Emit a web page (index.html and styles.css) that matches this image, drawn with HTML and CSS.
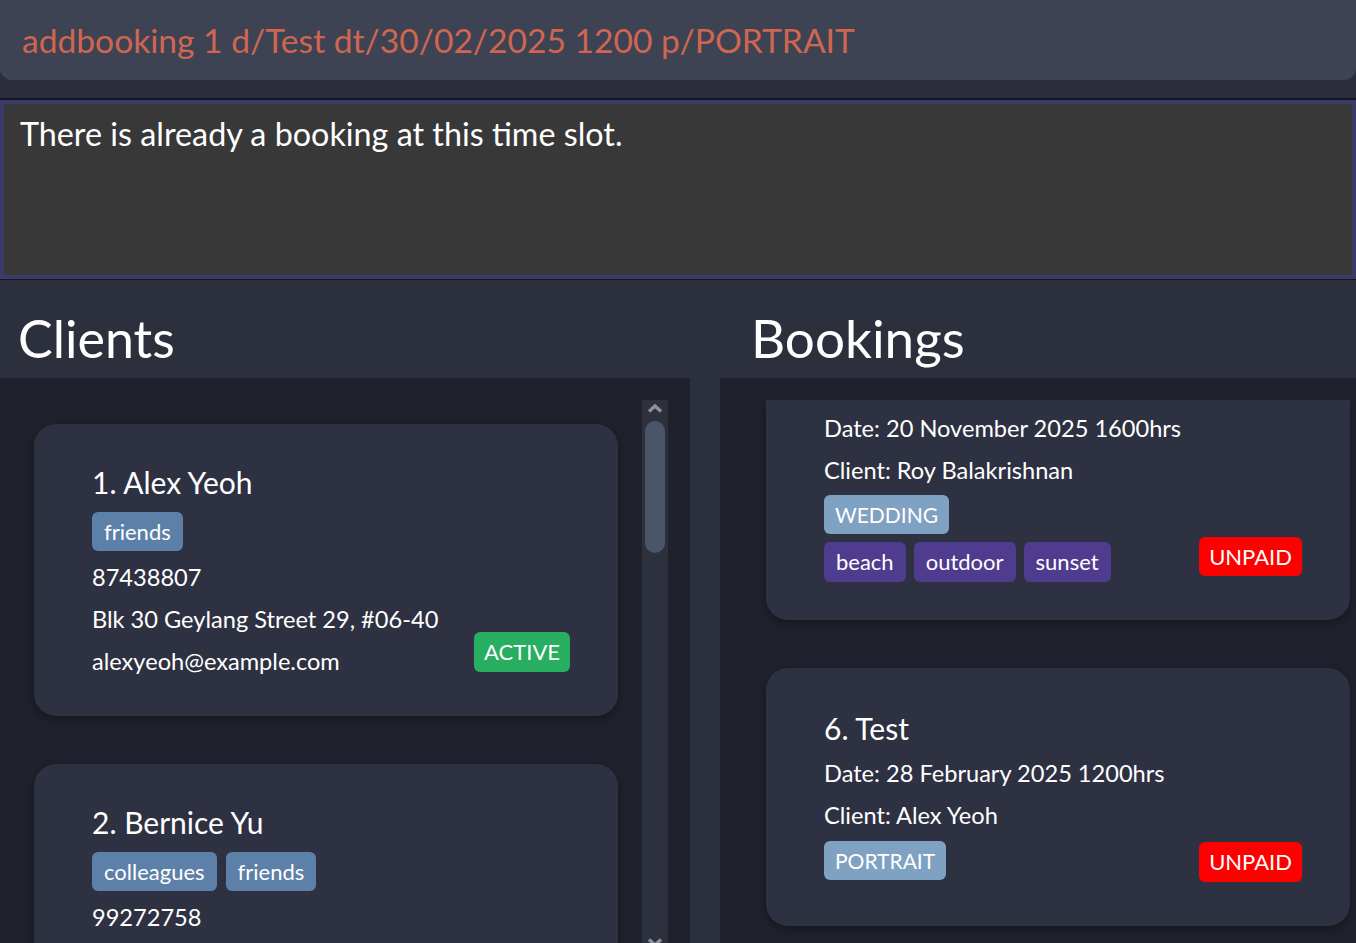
FILE: index.html
```html
<!DOCTYPE html>
<html lang="en">
<head>
<meta charset="utf-8">
<title>Bookings</title>
<link rel="stylesheet" href="styles.css">
</head>
<body>
<div class="app">
  <header class="command-bar">
    <div class="command-input">addbooking 1 d/Test dt/30/02/2025 1200 p/PORTRAIT</div>
  </header>
  <div class="result">There is already a booking at this time slot.</div>
  <main class="lists">
    <section class="col">
      <h1 class="col-title col-title-clients">Clients</h1>
      <div class="panel">
        <div class="viewport">
          <div class="cards cards-clients">
            <article class="card client">
              <div class="card-body">
                <div class="name">1. Alex Yeoh</div>
                <div class="tags tags-client">
                  <span class="tag tag-blue">friends</span>
                </div>
                <div class="row">87438807</div>
                <div class="row">Blk 30 Geylang Street 29, #06-40</div>
                <div class="row">alexyeoh@example.com</div>
              </div>
              <span class="badge badge-active badge-client">ACTIVE</span>
            </article>
            <article class="card client">
              <div class="card-body">
                <div class="name">2. Bernice Yu</div>
                <div class="tags tags-client">
                  <span class="tag tag-blue">colleagues</span>
                  <span class="tag tag-blue">friends</span>
                </div>
                <div class="row">99272758</div>
              </div>
            </article>
          </div>
          <div class="scrollbar">
            <svg class="arrow arrow-up" width="16" height="9" viewBox="0 0 16 9"><path d="M2 7.5 L8 2 L14 7.5" fill="none" stroke="#8e9198" stroke-width="3.4"/></svg>
            <div class="thumb"></div>
            <div class="track-fill"></div>
            <svg class="arrow arrow-down" width="16" height="9" viewBox="0 0 16 9"><path d="M2 1.5 L8 7 L14 1.5" fill="none" stroke="#8e9198" stroke-width="3.4"/></svg>
          </div>
        </div>
      </div>
    </section>
    <section class="col">
      <h1 class="col-title col-title-bookings">Bookings</h1>
      <div class="panel">
        <div class="viewport">
          <div class="cards cards-bookings">
            <article class="card booking booking-clipped">
              <div class="card-body">
                <div class="row">Date: 20 November 2025 1600hrs</div>
                <div class="row">Client: Roy Balakrishnan</div>
                <div class="tags tags-type tags-type-tight">
                  <span class="tag tag-type">WEDDING</span>
                </div>
                <div class="tags tags-extra">
                  <span class="tag tag-purple">beach</span>
                  <span class="tag tag-purple">outdoor</span>
                  <span class="tag tag-purple">sunset</span>
                </div>
              </div>
              <span class="badge badge-unpaid badge-b1">UNPAID</span>
            </article>
            <article class="card booking">
              <div class="card-body">
                <div class="name name-booking">6. Test</div>
                <div class="row">Date: 28 February 2025 1200hrs</div>
                <div class="row">Client: Alex Yeoh</div>
                <div class="tags tags-type">
                  <span class="tag tag-type">PORTRAIT</span>
                </div>
              </div>
              <span class="badge badge-unpaid badge-b2">UNPAID</span>
            </article>
          </div>
        </div>
      </div>
    </section>
  </main>
</div>
</body>
</html>
```

FILE: styles.css
```css
* { box-sizing: border-box; }

html, body {
  margin: 0;
  height: 943px;
  overflow: hidden;
}

body {
  background: #2b2f3b;
  color: #ffffff;
  font-family: "Lato", "Segoe UI", "Open Sans", sans-serif;
}

.app {
  display: flex;
  flex-direction: column;
  height: 943px;
}

.command-bar {
  height: 99px;
  background: #2b2e3a;
  flex: none;
}

.command-input {
  height: 80px;
  background: #3e4353;
  border-radius: 0 0 12px 12px;
  color: #d06651;
  font-size: 33.6px;
  line-height: 80px;
  padding-left: 22px;
  white-space: nowrap;
}

.result {
  flex: none;
  height: 179px;
  margin-top: 1px;
  background: #383838;
  border: 4px solid #3c3a69;
  box-shadow: 0 0 0 2px #131522;
  font-size: 32.3px;
  line-height: 36px;
  padding: 12px 16px;
}

.lists {
  flex: 1;
  display: grid;
  grid-template-columns: 690px 636px;
  column-gap: 30px;
  margin-top: 1px;
  min-height: 0;
  background: #2c303d;
}

.col {
  display: flex;
  flex-direction: column;
  min-height: 0;
}

.col-title {
  margin: 0;
  height: 98px;
  padding-top: 27px;
  font-size: 52px;
  line-height: 62px;
  font-weight: 400;
  flex: none;
}

.col-title-clients { padding-left: 18px; }
.col-title-bookings { padding-left: 31px; font-size: 53px; }

.panel {
  flex: 1;
  background: #1f222c;
  padding: 22px 22px 0 22px;
  min-height: 0;
  display: flex;
}

.col:last-child .panel { padding-right: 0; }

.viewport {
  flex: 1;
  display: flex;
  overflow: hidden;
  min-height: 0;
}

.cards {
  flex: 1;
  display: flex;
  flex-direction: column;
  gap: 48px;
}

.cards-clients { padding: 24px 24px 0 12px; }
.cards-bookings { padding: 0 6px 0 24px; }

.scrollbar {
  width: 26px;
  flex: none;
  background: #2d313e;
  display: flex;
  flex-direction: column;
  align-items: center;
}

.arrow { flex: none; }
.arrow-up { margin-top: 4px; }
.arrow-down { margin-bottom: -4px; }

.thumb {
  width: 20px;
  height: 132px;
  margin-top: 8px;
  background: #4b5569;
  border-radius: 10px;
  flex: none;
}

.track-fill { flex: 1; }

.card {
  flex: none;
  width: 584px;
  background: #2d3142;
  border-radius: 22px;
  box-shadow: 0 3px 10px rgba(0, 0, 0, 0.35);
  display: flex;
  padding: 40px 48px 34px 58px;
}

.client { min-height: 292px; }

.booking { padding-top: 42px; padding-bottom: 46px; }

.booking-clipped {
  border-radius: 0 0 22px 22px;
  padding-top: 7px;
  padding-bottom: 38px;
}

.card-body { flex: 1; min-width: 0; }

.name {
  font-size: 30px;
  line-height: 36px;
  margin-bottom: 12px;
}

.name-booking { margin-bottom: 6px; }

.row {
  font-size: 23.6px;
  line-height: 42px;
  white-space: nowrap;
}

.tags {
  display: flex;
  gap: 9px;
}

.tags-client { margin-bottom: 5px; }
.tags-type { margin-top: 5px; }
.tags-type-tight { margin-top: 4px; }
.tags-extra { margin-top: 8px; gap: 8px; }

.tag {
  display: inline-block;
  height: 39px;
  line-height: 39px;
  font-size: 22px;
  padding: 0 12px;
  border-radius: 6px;
  color: #ffffff;
}

.tags-extra .tag { height: 40px; line-height: 40px; }

.tag-blue { background: #5d80a9; }
.tag-type { background: #7fa2c3; font-size: 21px; padding: 0 11px; }
.tag-purple { background: #4f3c8f; }

.badge {
  align-self: flex-end;
  flex: none;
  height: 40px;
  line-height: 40px;
  font-size: 22px;
  padding: 0 10px;
  border-radius: 6px;
  color: #ffffff;
}

.badge-active { background: #27ae60; }
.badge-unpaid { background: #ff0000; height: 39px; line-height: 39px; }

.badge-client { margin-bottom: 10px; }
.badge-b1 { margin-bottom: 6px; }
.badge-b2 { margin-bottom: -2px; height: 40px; line-height: 40px; }
```
